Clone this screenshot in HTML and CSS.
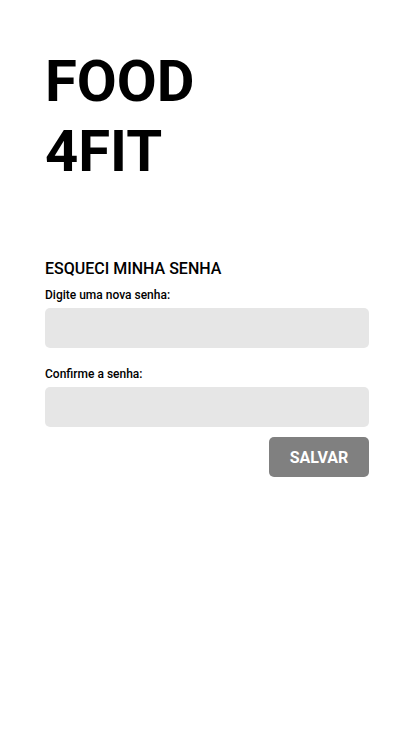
FILE: index.html
```html
<!DOCTYPE html>
<html lang="pt">
<head>
<meta charset="utf-8">
<title>Food 4Fit</title>
<link rel="stylesheet" href="styles.css">
</head>
<body>
<main class="page">
  <h1 class="logo">FOOD<br>4FIT</h1>
  <form class="form">
    <h2 class="title">ESQUECI MINHA SENHA</h2>
    <label class="label" for="p1">Digite uma nova senha:</label>
    <input class="input" id="p1" type="password">
    <label class="label second" for="p2">Confirme a senha:</label>
    <input class="input" id="p2" type="password">
    <div class="actions">
      <button class="btn" type="button">SALVAR</button>
    </div>
  </form>
</main>
</body>
</html>
```
FILE: styles.css
```css
* { box-sizing: border-box; }
html, body { margin: 0; padding: 0; background: #fff; }
body { font-family: Roboto, "Noto Sans", sans-serif; color: #000; }
.page { padding: 46px 45px 0 45px; display: flex; flex-direction: column; }
.logo { margin: 0; font-size: 58px; line-height: 70px; font-weight: 700; letter-spacing: 0; }
.form { display: flex; flex-direction: column; margin-top: 72px; }
.title { margin: 0 0 7px; font-size: 16px; line-height: 22px; font-weight: 500; }
.label { font-size: 12px; line-height: 16px; font-weight: 500; margin-bottom: 5px; }
.label.second { margin-top: 18px; }
.input { width: 100%; height: 40px; border: 0; border-radius: 5px; background: #e6e6e6; outline: none; }
.actions { display: flex; justify-content: flex-end; margin-top: 10px; }
.btn { width: 100px; height: 40px; border: 0; border-radius: 5px; background: #808080; color: #fff; font-family: Roboto, sans-serif; font-weight: 700; font-size: 16px; }
```
